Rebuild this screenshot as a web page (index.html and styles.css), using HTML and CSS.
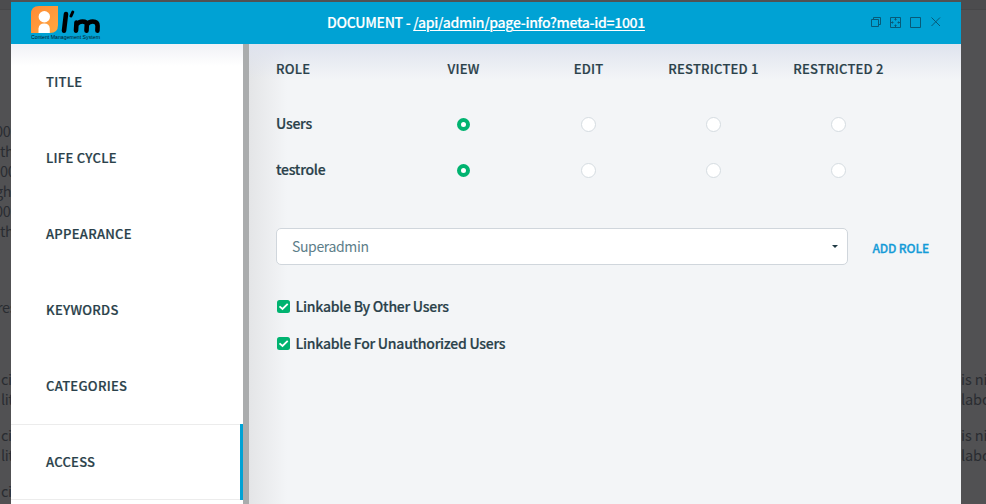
FILE: index.html
```
<!DOCTYPE html>
<html lang="en">
<head>
<meta charset="utf-8">
<title>Page info</title>
<link rel="stylesheet" href="styles.css">
</head>
<body>
<div class="page">
  <div class="gutter gutter-left">
    <div class="block b1"><p>00</p><p class="in">th</p><p class="in">00</p><p>gh</p><p>00</p><p class="in">th</p></div>
    <div class="block b2"><p class="re">res</p></div>
    <div class="block b3"><p class="ci">ci</p><p class="ci">lit</p></div>
    <div class="block b4"><p class="ci">ci</p><p class="ci">lit</p></div>
    <div class="block b4"><p class="ci">ci</p></div>
  </div>
  <main class="modal">
    <header class="head">
      <svg class="logo" width="72" height="36" viewBox="0 0 72 36">
        <defs><linearGradient id="lg" x1="0" y1="0" x2="1" y2="1"><stop offset="0" stop-color="#ff8a35"/><stop offset="1" stop-color="#ffa83f"/></linearGradient></defs>
        <path d="M8 0H27V19Q27 27 19 27H0V8Q0 0 8 0Z" fill="url(#lg)"/>
        <circle cx="13.3" cy="10.700" r="5.700" fill="#fff"/>
        <path d="M7.500 27V22.500Q8 17.500 13.200 17.500T18.800 22.500V27Z" fill="#fff"/>
        <g fill="none" stroke="#000" stroke-linecap="round" stroke-linejoin="round" stroke-width="4.600">
          <path d="M35 8L33 24.700M45.500 16.500L45 24.700M45.500 18.500Q48 15.500 51.500 15.500Q56 15.500 55.800 19L55.500 24.700M56 18.500Q58 15.500 61.800 15.500Q66.600 15.500 66.600 20L66.400 24.700"/>
          <path d="M41.800 6L40 10" stroke-width="3"/>
        </g>
        <text class="tag" x="0" y="33" textLength="69" lengthAdjust="spacingAndGlyphs">Content Management System</text>
      </svg>
      <h1 class="title">DOCUMENT - <a>/api/admin/page-info?meta-id=1001</a></h1>
      <svg class="tools" width="72" height="14" viewBox="0 0 72 14">
        <g fill="none" stroke="#075a78">
          <path d="M.5 5.500H7.500V12.500H.5ZM2.500 5V3.500H9.500V10.500H8"/>
          <path d="M19.500 3.500H29.500V13.500H19.500ZM24.500 4V6.500M24.500 10.500V13M20 8.500H22.500M26.500 8.500H29"/>
          <path d="M23 5.500H26M23 11.500H26M21.500 7V10M27.500 7V10" stroke-opacity=".55"/>
          <path d="M39.500 3.500H49.500V13.500H39.500Z"/>
          <path d="M60.500 3.500L69 12M69 3.500L60.500 12"/>
        </g>
      </svg>
    </header>
    <div class="body">
      <nav class="tabs">
        <div class="tab">TITLE</div>
        <div class="tab">LIFE CYCLE</div>
        <div class="tab">APPEARANCE</div>
        <div class="tab">KEYWORDS</div>
        <div class="tab">CATEGORIES</div>
        <div class="tab active">ACCESS</div>
      </nav>
      <section class="content">
        <div class="roles">
          <div class="row header"><span>ROLE</span><span>VIEW</span><span>EDIT</span><span>RESTRICTED 1</span><span>RESTRICTED 2</span></div>
          <div class="row"><span class="name">Users</span><i class="radio on"></i><i class="radio"></i><i class="radio"></i><i class="radio"></i></div>
          <div class="row"><span class="name">testrole</span><i class="radio on"></i><i class="radio"></i><i class="radio"></i><i class="radio"></i></div>
        </div>
        <div class="add">
          <div class="select"><span class="value">Superadmin</span><i class="caret"></i></div>
          <span class="add-btn">ADD ROLE</span>
        </div>
        <div class="check"><svg width="13" height="13" viewBox="0 0 13 13"><rect width="13" height="13" rx="2.500" fill="#00b370"/><path d="M2.500 6.300L5.500 9L10.700 3.800" fill="none" stroke="#fff" stroke-width="1.800"/></svg><span class="name">Linkable By Other Users</span></div>
        <div class="check"><svg width="13" height="13" viewBox="0 0 13 13"><rect width="13" height="13" rx="2.500" fill="#00b370"/><path d="M2.500 6.300L5.500 9L10.700 3.800" fill="none" stroke="#fff" stroke-width="1.800"/></svg><span class="name">Linkable For Unauthorized Users</span></div>
      </section>
    </div>
  </main>
  <div class="gutter gutter-right">
    <div class="block r1"><p>is ni</p><p>labo</p></div>
    <div class="block b4"><p>is ni</p><p>labo</p></div>
  </div>
</div>
</body>
</html>
```
FILE: styles.css
```
* { box-sizing: border-box; }
body {
  margin: 0;
  height: 504px;
  overflow: hidden;
  background: #515153;
  color: #2a414a;
  font: 500 14px/20px "Noto Sans CJK SC", "Noto Sans", sans-serif;
}
.page { display: grid; grid-template-columns: 11px 950px 25px; height: 504px; }
.gutter {
  overflow: hidden;
  height: 504px;
  color: #292c31;
  font-size: 14.5px;
  font-weight: 400;
  letter-spacing: -0.4px;
  white-space: nowrap;
  background: linear-gradient(#4c4c4e 9px, #474749 9px, #474749 10px, #515153 10px);
}
.gutter p { margin: 0; }
.gutter-left p { margin-left: -5px; }
.gutter-left .in { margin-left: 0; }
.gutter-left .re { margin-left: -3px; }
.gutter-left .ci { margin-left: 1px; }
.b1 { padding-top: 121px; }
.b2 { padding-top: 56px; }
.b3 { padding-top: 52px; }
.b4 { padding-top: 16px; }
.r1 { padding-top: 369px; }
.gutter-right { letter-spacing: -0.1px; }
.modal { margin-top: 2px; height: 502px; overflow: hidden; background: #f3f5f8; }
.head {
  display: flex;
  align-items: flex-start;
  height: 42px;
  padding-left: 20px;
  background: #00a2d4;
}
.logo { margin-top: 4px; flex: none; }
.tag { font: 400 5.5px "Liberation Sans", sans-serif; fill: #06202b; }
.title {
  margin: 10px 0 0 224px;
  width: 544px;
  color: #fff;
  font-size: 14px;
  font-weight: 500;
  line-height: 20px;
  letter-spacing: -0.3px;
  -webkit-text-stroke: 0.15px;
  white-space: nowrap;
}
.title a { text-decoration: underline; text-underline-offset: 2px; text-decoration-thickness: 1px; }
.tools { margin-top: 12px; flex: none; }
.body { display: flex; height: 460px; }
.tabs {
  width: 238px;
  flex: none;
  border-right: 6px solid #aaacad;
  background: linear-gradient(#f0f1f6, #fff 22px);
}
.tab {
  display: flex;
  align-items: center;
  height: 76px;
  padding-left: 35px;
  font-size: 13px;
  letter-spacing: 0.27px;
  -webkit-text-stroke: 0.2px;
}
.tab.active {
  background:
    linear-gradient(#00a2d4, #00a2d4) right / 3px 100% no-repeat,
    linear-gradient(#ececec, #ececec) top / 100% 1px no-repeat,
    linear-gradient(#ececec, #ececec) bottom / 100% 1px no-repeat;
}
.content {
  flex: 1;
  padding: 15px 0 0 27px;
  background:
    linear-gradient(#dfe3ee, rgba(243, 245, 247, 0) 35px),
    linear-gradient(90deg, #e4e5e7, #f3f5f7 38px);
}
.row {
  display: grid;
  grid-template-columns: 125px repeat(4, 125px);
  align-items: center;
  justify-items: center;
  height: 46px;
}
.row > :first-child { justify-self: start; }
.row.header {
  height: 20px;
  margin-bottom: 22px;
  font-size: 13px;
  letter-spacing: 0.22px;
  -webkit-text-stroke: 0.2px;
  white-space: nowrap;
}
.name { letter-spacing: -0.26px; margin-top: -2px; -webkit-text-stroke: 0.2px; }
.radio { width: 15px; height: 15px; border: 1px solid #d5dce1; border-radius: 50%; background: #fff; }
.radio.on { width: 13px; height: 13px; border: 4px solid #00b370; }
.add { display: flex; align-items: center; margin-top: 35px; }
.select {
  display: flex;
  align-items: center;
  justify-content: space-between;
  width: 572px;
  height: 37px;
  padding: 0 9px 0 15px;
  border: 1px solid #d0d6dc;
  border-radius: 5px;
  background: #fff;
  color: #5d7e89;
  font-weight: 400;
}
.value { margin-top: -2px; letter-spacing: -0.36px; }
.caret { border: 3px solid transparent; border-top-color: #203a44; border-bottom: 0; }
.add-btn { margin: 3px 0 0 24.5px; color: #149bd7; font-size: 12px; letter-spacing: -0.15px; -webkit-text-stroke: 0.3px; }
.check { display: flex; align-items: center; height: 20px; margin-top: 17px; gap: 5.5px; padding-left: 1px; }
.check svg { margin-top: -1px; }
.add + .check { margin-top: 32px; }
```
